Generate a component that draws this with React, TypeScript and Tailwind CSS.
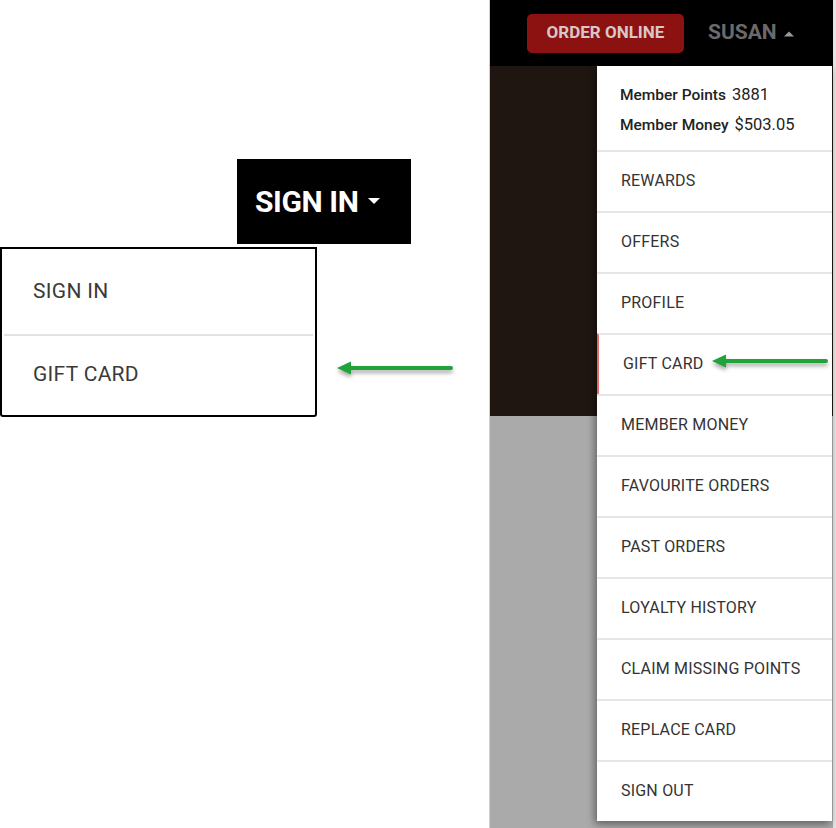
const MENU_ITEMS = [
  "REWARDS",
  "OFFERS",
  "PROFILE",
  "GIFT CARD",
  "MEMBER MONEY",
  "FAVOURITE ORDERS",
  "PAST ORDERS",
  "LOYALTY HISTORY",
  "CLAIM MISSING POINTS",
  "REPLACE CARD",
  "SIGN OUT",
];

function GreenArrow({ className = "" }: { className?: string }) {
  return (
    <svg
      width="118"
      height="18"
      viewBox="0 0 118 18"
      className={`drop-shadow-[0_3px_2px_rgba(0,0,0,0.35)] ${className}`}
    >
      <line x1="12" y1="8" x2="115" y2="8" stroke="#22a23a" strokeWidth="4" strokeLinecap="round" />
      <polygon points="1,8 15,1.5 15,14.5" fill="#22a23a" />
    </svg>
  );
}

function Caret({ up = false, color, w = 12 }: { up?: boolean; color: string; w?: number }) {
  return (
    <svg width={w} height="7" viewBox="0 0 12 7">
      <polygon points={up ? "0,7 6,1 12,7" : "0,0 6,6 12,0"} fill={color} />
    </svg>
  );
}

export default function App() {
  return (
    <div className="flex h-[828px] w-[836px] overflow-hidden bg-white font-['Roboto',sans-serif]">
      {/* Signed-out state */}
      <div className="w-[489px] shrink-0 pt-[159px]">
        <div className="ml-[237px] flex h-[85px] w-[174px] items-center gap-[9px] bg-black pl-[18px]">
          <span className="text-[30px] font-bold tracking-[-0.4px] text-white">SIGN IN</span>
          <Caret color="#ffffff" w={14} />
        </div>
        <div className="mt-[3px] flex">
          <div className="h-[170px] w-[317px] rounded-b-[3px] border-2 border-black bg-white">
            <div className="flex h-[85px] items-center pl-[31px] text-[21px] tracking-[0.3px] text-[#3a3a3a]">SIGN IN</div>
            <div className="mx-[2px] h-[2px] bg-[#e2e2e2]" />
            <div className="flex h-[77px] items-center pl-[31px] text-[21px] tracking-[0.3px] text-[#3a3a3a]">GIFT CARD</div>
          </div>
          <GreenArrow className="mb-[39px] ml-[19px] self-end" />
        </div>
      </div>

      {/* Signed-in state */}
      <div className="relative flex flex-1 flex-col border-l border-[#d0d0d0] border-r-[3px] border-r-[#e4e4e4]">
        <div className="flex h-[66px] items-center bg-black">
          <button className="ml-[37px] h-[39px] w-[157px] rounded-[5px] bg-[#8c1212] text-[17px] font-bold text-[#d9c7c7]">
            ORDER ONLINE
          </button>
          <div className="ml-[24px] flex items-center gap-[7px]">
            <span className="text-[21px] font-bold text-[#6a6a6a]">SUSAN</span>
            <Caret up color="#9a9a9a" w={10} />
          </div>
        </div>
        <div className="h-[350px] bg-[#1f1611]" />
        <div className="flex-1 bg-[#aaaaaa]" />

        <div className="absolute left-[107px] top-[66px] w-[235px] bg-white shadow-[-2px_3px_8px_rgba(0,0,0,0.45)]">
          <div className="flex h-[84px] flex-col justify-center gap-[6px] pt-[4px] pl-[23px] text-[#222]">
            <div className="flex items-baseline gap-[6px] leading-[23px]">
              <span className="text-[15.5px] font-medium">Member Points</span>
              <span className="text-[16.5px]">3881</span>
            </div>
            <div className="flex items-baseline gap-[6px] leading-[23px]">
              <span className="text-[15.5px] font-medium">Member Money</span>
              <span className="text-[16.5px]">$503.05</span>
            </div>
          </div>
          {MENU_ITEMS.map((item) => {
            const active = item === "GIFT CARD";
            return (
              <div
                key={item}
                className={`relative flex h-[61px] items-center border-t-2 border-[#e6e6e6] pb-[2px] text-[16px] tracking-[0.2px] text-[#333] ${
                  active ? "border-l-2 border-l-[#e46b6b] pl-[24px]" : "pl-[24px]"
                }`}
              >
                {item}
                {active && <GreenArrow className="absolute left-[112px] top-[18px]" />}
              </div>
            );
          })}
        </div>
      </div>
    </div>
  );
}
